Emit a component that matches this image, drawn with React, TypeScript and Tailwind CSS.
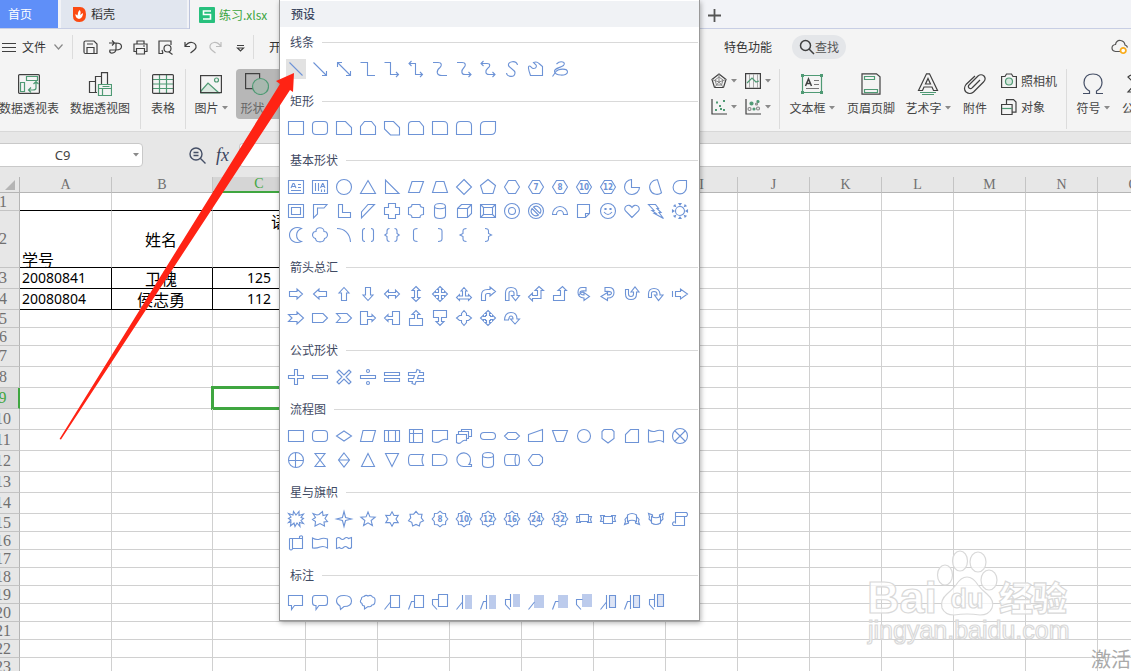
import type { ReactNode } from 'react';

const UI = "font-['Noto_Sans_CJK_SC',sans-serif]";

/* ---------- shape glyphs ---------- */

type Shape = {
  d: string;
  label?: string;
  light?: string;
  pale?: string;
};

const s = (d: string, label?: string): Shape => ({ d, label });

function star(points: number, outer: number, inner: number, cy = 8): string {
  let out = '';
  for (let i = 0; i < points * 2; i++) {
    const r = i % 2 === 0 ? outer : inner;
    const a = (Math.PI * i) / points - Math.PI / 2;
    out += (i === 0 ? 'M' : 'L') + (8 + r * Math.cos(a)).toFixed(2) + ' ' + (cy + r * Math.sin(a)).toFixed(2);
  }
  return out + 'z';
}

const HEX = 'M4.5 1.5h7L15.5 8l-4 6.5h-7L.5 8z';
const BADGE = star(8, 7.8, 6.2);
const CIRCLE = 'M.5 8a7.5 7.5 0 1 0 15 0a7.5 7.5 0 1 0-15 0';

const lines: Shape[] = [
  s('M1.5 1.5l13 13'),
  s('M1.5 1.5l13 13M14.5 10v4.5H10'),
  s('M1.5 1.5l13 13M14.5 10v4.5H10M1.5 6V1.5H6'),
  s('M.5 1.5h7v13H15'),
  s('M.5 1.5h6v12h8M12 11l2.5 2.5L12 16'),
  s('M1 2.5h6.5v11h7M12 11l2.5 2.5L12 16M3.500 0L1 2.500 3.500 5'),
  s('M1 1.5h5c4 0 4 3 2 5c-4 3-4 8 2 8h5'),
  s('M1 1.5h5c4 0 4 3 2 5c-3 3-3 7 1 7h6M12.500 11l2.500 2.500-2.500 2.500'),
  s('M1 2.5h6c4 0 3 3 1 4.500c-3 2.500-3 6.500 1 6.500h6M12.500 11l2.500 2.500-2.500 2.500M3.500 0L1 2.500 3.500 5'),
  s('M13.500 4c-1-5-10-4-9 .5c1 3 7 4 6.500 7.500c-.5 5-8 4-8.500 0'),
  s('M2.500 14.500C0 8 0 5 1.500 5c1.500 0 2 2.500 4 2.500c3 0 4-3 1.500-4.500L5.500 1.500c2-.7 4-.7 5.500 1l3.500 3v9z'),
  s('M4.500 3c4-4 10-2 7 1.500C8 7 3 7 2.500 10c-.5 5 13 5.500 13 1c0-4-9-3.500-11.500-.5L.5 15.500'),
];

const rects: Shape[] = [
  s('M.5 1.5h15v13H.5z'),
  s('M4 1.5h8q3.500 0 3.500 3.500v6q0 3.500-3.500 3.500H4Q.5 14.500.5 11V5Q.5 1.500 4 1.500z'),
  s('M.5 1.5h9l6 6v7H.5z'),
  s('M4.500 1.5h7l4 5v8H.5v-8z'),
  s('M.5 1.5h9l6 6v7.500h-9l-6-6z'),
  s('M4 1.5h7.500l4 5v8H.5V5q0-3.500 3.500-3.500z'),
  s('M.5 1.5h11q4 0 4 4v9H.5z'),
  s('M4.500 1.5h7q4 0 4 4v9H.5v-9q0-4 4-4z'),
  s('M5 1.5h10.500V10q0 4.500-4.500 4.500H.5V6Q.5 1.5 5 1.5z'),
];

const basics: Shape[] = [
  s('M.5 1.5h15v13H.5zM3 9l2-4.500h1L8 9M4 7.500h3M10 5.500h3M10 8.500h3M3 11.500h10'),
  s('M.5 1.5h15v13H.5zM3.500 4v8M6.500 4v8M8.500 9l2-4.500h.5L13 9M9.500 7.500h3M9.500 10.500V13M12.500 10.500V13'),
  s(CIRCLE),
  s('M8 1.5l7.500 13H.5z'),
  s('M1.5 1v13.500H15z'),
  s('M4 2.500h11.500l-4 11H.5z'),
  s('M4 2.500h8l3.500 11H.5z'),
  s('M8 .5L15.500 8 8 15.500.5 8z'),
  s('M8 .5l7.500 6-2.500 8H3l-2.500-8z'),
  s(HEX),
  s(HEX, '7'),
  s(HEX, '8'),
  s(HEX, '10'),
  s(HEX, '12'),
  s('M7.500.5A7.500 7.500 0 1 0 15.500 8.500h-8z'),
  s('M9.500.8l4 13A7.300 7.300 0 1 1 9.500.8z'),
  s('M8 1.500h6.500V8A6.700 6.700 0 1 1 8 1.500z'),
  s('M.5 1.500h15v13H.5zM3.500 4.500h9v7h-9z'),
  s('M1.500 1.500H15l-3 3.500H5.500v6l-4 4z'),
  s('M2.500 1.500h4v8h8v5h-12z'),
  s('M1.500 15V9L8 1.500h6.500z'),
  s('M4.500.5h7v4h4v7h-4v4h-7v-4h-4v-7h4z'),
  s('M4 1.500h8q0 3 3.500 3v7q-3.500 0-3.500 3H4q0-3-3.500-3v-7q3.500 0 3.500-3z'),
  s('M2.500 3.500v9c0 4 11 4 11 0v-9c0-4-11-4-11 0c0 3 11 3 11 0'),
  s('M1.500 5.500l4-4h10v9l-4 4h-10zM1.500 5.500h10v9M11.500 5.500l4-4'),
  s('M.5 1.500h15v13H.5zM3.500 4.500h9v7h-9zM.5 1.500l3 3M15.500 1.500l-3 3M.5 14.500l3-3M15.500 14.500l-3-3'),
  s(CIRCLE + 'M4.500 8a3.500 3.500 0 1 0 7 0a3.500 3.500 0 1 0-7 0'),
  s(CIRCLE + 'M4 5.500l6.500 6.500A4.700 4.700 0 0 1 4 5.500zM5.500 4L12 10.500A4.700 4.700 0 0 0 5.500 4z'),
  s('M.5 11.500a7.500 8 0 0 1 15 0h-4a3.500 4 0 0 0-7 0z'),
  s('M1.500 1.500h12v9l-4 4h-8zM9.500 14.500v-4h4'),
  s(CIRCLE + 'M5 5.500h1v1H5zM10 5.500h1v1h-1zM4 9q4 5 8 0'),
  s('M8 14.500L1.500 8C-1.500 4 5-.5 8 4.500c3-5 9.500-.5 6.500 3.500z'),
  s('M.5 1.500h7l3 4H9l4 4h-2l4.500 6-9-5H8L4 7.500h2z'),
  s('M3.500 8a4.500 4.500 0 1 0 9 0a4.500 4.500 0 1 0-9 0M7 .5h2L8 2zM7 15.500h2L8 14zM.5 7v2L2 8zM15.500 7v2L14 8zM2 3l1-1 .5 1.500zM14 3l-1-1-.5 1.500zM2 13l1 1 .5-1.500zM14 13l-1 1-.5-1.500z'),
  s('M13.500 1.500C7-1.500 1.500 3 1.500 8s5.500 9.500 12 6.500C7 12.500 7 4 13.500 1.500z'),
  s('M4 4.500c-.5-5 8-5 8 0c4 0 5 5.500.5 7c-.5 4.500-8.500 4.500-9 0c-4.500-1.500-3.500-7 .5-7z'),
  s('M1 1.500c7.500 0 13 5 13.500 13.500'),
  s('M5 1.500q-2.500 0-2.500 2.500v8q0 2.500 2.500 2.500M11 1.500q2.500 0 2.500 2.500v8q0 2.500-2.500 2.500'),
  s('M5.500 1.500q-2.500 0-2.500 2.500v2.500L.8 8 3 9.500V12q0 2.500 2.500 2.500M10.500 1.500q2.500 0 2.500 2.500v2.500L15.200 8 13 9.500V12q0 2.500-2.500 2.500'),
  s('M9.500 1.500q-4 0-4 2.500v8q0 2.500 4 2.500'),
  s('M6 1.500q4 0 4 2.500v8q0 2.500-4 2.500'),
  s('M10.500 1.500q-3.500 0-3.500 2.500v2.500L4 8l3 1.500V12q0 2.500 3.500 2.500'),
  s('M5 1.500q3.500 0 3.500 2.500v2.500l3 1.500-3 1.500V12q0 2.500-3.500 2.500'),
];

const arrows: Shape[] = [
  s('M1.500 5.500H9V3l5.500 5L9 13v-2.500H1.500z'),
  s('M14.500 5.500H7V3L1.500 8 7 13v-2.500h7.500z'),
  s('M5.500 14.500V7H3l5-5.500L13 7h-2.500v7.500z'),
  s('M5.500 1.500V9H3l5 5.500L13 9h-2.500V1.500z'),
  s('M.5 8l4-4v2.500h7V4l4 4-4 4V9.500h-7V12z'),
  s('M8 .5l4 4H9.500v7H12l-4 4-4-4h2.500v-7H4z'),
  s('M8 .5l3 3H9.500v3h3V5l3 3-3 3V9.500h-3v3H11l-3 3-3-3h1.500v-3h-3V11l-3-3 3-3v1.500h3v-3H5z'),
  s('M8 1.500l3 3.500H9.500v5h3V8.500l3 3-3 3V13h-9v1.500l-3-3 3-3V10h3V5H5z'),
  s('M1.500 14.500V9q0-5.500 6-5.500h2.500V1l5.500 4.500L10 10V7.500H7.500q-2 0-2 2v5z'),
  s('M1.500 14.500V7q0-5.500 5.500-5.500q6 0 6 5.500v2.500h2.500l-4 5-4-5H10V7q0-2-2.500-2T5 7v7.500z'),
  s('M.5 11l4-4v2.500h5v-5H7L11 .5l4.500 4H13v8H4.500V15z'),
  s('M1.500 9.500h7v-5H6l4.500-4 4 4h-2v10h-11z'),
  s('M10 1.500H6Q2 1.500 2 6.500q0 5 6 5.500v2.500l5.500-4-5.500-4V9Q4 8.500 4 6.500t6-1.500zM3 9q2-3.500 5-2.500'),
  s('M5 1.500h4q5 0 5 5q0 5.500-6.500 5.500v2.500L1 10.500l6.500-4V9q4 0 4-2T5 5.500z'),
  s('M1.500 3.500V8q0 5.500 5.500 5.500T12.500 8V6h2.500l-4-5-4 5h2.500v2q0 2.500-2.500 2.500T4.500 8V3.500z'),
  s('M.5 11.500V8q0-5.500 5.500-5.500T12 8v1h3l-4.500 5.500L6.500 9H9V8q0-2.500-3-2.500T3.500 8v3.500z'),
  s('M.5 5v6M3.500 5.500h5V3l7 5-7 5v-2.500h-5z'),
  s('M.5 4.500H9V2l6.500 6L9 14v-2.500H.5L4 8z'),
  s('M.5 3.500H11L15.500 8 11 12.500H.5z'),
  s('M.5 3.500H11L15.500 8 11 12.500H.5L4.500 8z'),
  s('M.5 1.500h7v5H12V4.500L15.500 8 12 11.500V9.500H7.500v5h-7z'),
  s('M15.500 1.500h-7v5H4V4.500L.5 8 4 11.500V9.500h4.500v5h7z'),
  s('M1.500 15.500v-7h5V4.500H4L8 .5l4 4H9.500v4h5v7z'),
  s('M1.500.5v7h5v4H4l4 4 4-4H9.500v-4h5v-7z'),
  s('M8 .5L10.500 3.500v2h2L15.500 8l-3 2.500h-2v2L8 15.500l-2.500-3v-2h-2L.5 8l3-2.500h2v-2z'),
  s('M8 .5l3 3H9.500v2h1v1h2V5l3 3-3 3V9.500h-2v1h-1v2H11l-3 3-3-3h1.500v-2h-1v-1h-2V11l-3-3 3-3v1.500h2v-1h1v-2H5z'),
  s('M.5 10Q1 2.500 7 2.500T13 9h2.500L11 14 6.500 9H9Q9 6 7 6t-2.500 4z'),
];

const formulas: Shape[] = [
  s('M6.500.5h3v6h6v3h-6v6h-3v-6h-6v-3h6z'),
  s('M.5 6.500h15v3H.5z'),
  s('M1 3l2-2 5 5 5-5 2 2-5 5 5 5-2 2-5-5-5 5-2-2 5-5z'),
  s('M.5 6.500h15v3H.5zM6.500 2a1.500 1.500 0 1 0 3 0a1.500 1.500 0 1 0-3 0M6.500 14a1.500 1.500 0 1 0 3 0a1.500 1.500 0 1 0-3 0'),
  s('M.5 3.500h15v3H.5zM.5 9.500h15v3H.5z'),
  s('M.5 3.500h7.500L9 .5l3 1-.5 2h4v3h-5l-1 3h6v3H8l-1 3-3-1 .5-2h-4v-3h5l1-3h-6z'),
];

const flows: Shape[] = [
  s('M.5 2.500h15v11H.5z'),
  s('M4 2.500h8q3.500 0 3.500 3.500v4q0 3.500-3.500 3.500H4Q.5 13.500.5 10V6Q.5 2.500 4 2.500z'),
  s('M8 3l7.500 5L8 13 .5 8z'),
  s('M3 2.500h12.500l-3 11H.5z'),
  s('M.5 2.500h15v11H.5zM4.500 2.500v11M11.500 2.500v11'),
  s('M1.500 1.500h13v13h-13zM1.500 5.500h13M5.500 1.500v13'),
  s('M.5 2.500h15v9q-4-1-7 1.500T.5 13.500z'),
  s('M.5 6.500h10v6q-3-1-5 1.500T.5 14.500zM2.500 6V3.500h10v7h-2M5.500 3V1.500h10v7h-3'),
  s('M4 4.500h8q3.500 0 3.500 3.500t-3.500 3.500H4Q.5 11.500.5 8T4 4.500z'),
  s('M4 4.500h8L15.500 8 12 11.500H4L.5 8z'),
  s('M.5 6.500l14-5v12H.5z'),
  s('M.5 2.500h15l-4 11h-7z'),
  s('M1.500 8a6.500 6.500 0 1 0 13 0a6.500 6.500 0 1 0-13 0'),
  s('M4 1.500h8l2 2v7L8 15l-6-4.500v-7z'),
  s('M6.500 1.500h8v13h-13v-8z'),
  s('M.5 2q4 2.500 7.500 1t7.500 0v11q-4-2.500-7.500-1t-7.500 1z'),
  s(CIRCLE + 'M3 3l10 10M13 3L3 13'),
  s(CIRCLE + 'M.5 8.500h15M7.500.5v15'),
  s('M3 1.500h10L8 8l5 6.500H3L8 8z'),
  s('M8 1l5.500 7L8 15 2.500 8zM2.500 8h11'),
  s('M8 1.500l6.500 13h-13z'),
  s('M1.500 1.500h13L8 14.500z'),
  s('M3 2.500h12.500q-3 5.500 0 11H3Q.5 13.500.5 8T3 2.500z'),
  s('M.5 2.500h8Q15 2.500 15 8t-6.500 5.500h-8z'),
  s('M15.500 14.500H7.500A6.800 6.800 0 1 1 14.500 8q0 3-1.500 4.500h2.500z'),
  s('M2.500 3.500v9c0 4 11 4 11 0v-9c0-4-11-4-11 0c0 3 11 3 11 0'),
  s('M3 2.500h10q2.500 0 2.500 5.500T13 13.500H3Q.5 13.500.5 8T3 2.500zM13 2.500Q11 2.500 11 8t2 5.500'),
  s('M4.500 2.500h7l3 3v5l-3 3h-7L.5 8z'),
];

const stars: Shape[] = [
  s('M8 4l3-3.500v4L15.500 3 13 6.500l2.500 1-2.500 2 2.500 3-4-1 .5 4L9 12l-2 3.500L6 12l-3.500 3 .5-4-2.500.5L3 9 .5 7.500 3 6 .5 2.500 5 4l.5-3.500z'),
  s('M7 3.500L10.500.5l.5 4 4.500-1L13 7.500l2.500 3-3.500.5.500 4L8 12.500 3 15l.5-4.500L.5 8.500l3-2-2.500-4 4 1.500z'),
  s(star(4, 7.500, 2.200)),
  s(star(5, 7.500, 3.300, 8.500)),
  s(star(6, 7.200, 4)),
  s(star(7, 7.700, 5.400)),
  s(BADGE, '8'),
  s(BADGE, '10'),
  s(BADGE, '12'),
  s(BADGE, '16'),
  s(BADGE, '24'),
  s(BADGE, '32'),
  s('M3.500 3.500h9v7h-9zM3.500 5.500h-3l1 3-1 3h4v-1M12.500 5.500h3l-1 3 1 3h-4v-1'),
  s('M3.500 5.500h9v7h-9zM3.500 10.500h-3l1-3-1-3h4v1M12.500 10.500h3l-1-3 1-3h-4v1'),
  s('M3.500 4q4.500-3 9 0v6.500q-4.500-2.500-9 0zM3.500 5.500l-2.500 3 .5 2-1 3 4-1.500v-1.500M12.500 5.500l2.500 3-.5 2 1 3-4-1.500v-1.500'),
  s('M3.500 5.500q4.500 2.500 9 0v6.500q-4.500 3-9 0zM3.500 10.500L1 8l.5-2-1-3.500 4 1.500v1.500M12.500 10.500L15 8l-.5-2 1-3.500-4 1.500v1.500'),
  s('M3.500 12.500v-11h11q2 2 0 4H4M12.500 5.500v9h-11q-2-1.500 0-3.500h2'),
  s('M1.500 3.500h10V1.500q2-1.500 3 0v12h-10M11.500 3.500h3M4.500 3.500v10.500q-1.500 2-3 0v-10.500'),
  s('M.5 3q4 2.500 7.500 1t7.500 0v9q-4-2.500-7.500-1t-7.500 1z'),
  s('M.5 3.500q2-2 4 0t4 0 4 0l3-1v10q-2 2-4 0t-4 0-4 0l-3 1z'),
];

const callouts: Shape[] = [
  s('M.5 1.500h14v10h-8l-3 4v-4h-3z'),
  s('M3 1.500h10q2.500 0 2.500 3v4q0 3-2.500 3H7l-3 4v-4H3q-2.500 0-2.500-3v-4q0-3 2.500-3z'),
  s('M4 12Q.5 10 .5 7Q.5 1.500 8 1.500T15.500 7Q15.500 12.500 8 12.500L4.500 15.500z'),
  s('M4 2.500Q6 .5 8 2q3-1.500 4.500 1q3 .5 2.500 4q0 4-3 4-1 2.500-4 1.500L4.500 15v-3Q2 12 2 9.500Q-1 8 1.500 5Q1 3 4 2.500z'),
  s('M6.500 1.500h9v12h-9zM.5 15.500l6-7.500'),
  s('M6.500 1.500h9v12h-9zM.5 15.500L3.500 7.500h3'),
  s('M6.500.5h9v12h-9zM6.500 5.500h-6v5l4.500 5'),
  { d: 'M6.500 1v14M.5 15.500l6-7.500', light: 'M9 1h7v14H9z' },
  { d: 'M6.500 1v14M.5 15.500L3.500 7.500h3', light: 'M9 1h7v14H9z' },
  { d: 'M6.500 0v13M6.500 5.500h-5v5l4.500 5', light: 'M9 0h7v13H9z' },
  { d: 'M.5 15.500l6-7.500', light: 'M6 1h10v13H6z' },
  { d: 'M.5 15.500L3.500 7.500h3', light: 'M6 1h10v13H6z' },
  { d: 'M6.500 5.500h-6v5l4.500 5', light: 'M6 0h10v13H6z' },
  { d: 'M6.500 1v14M.5 15.500l6-7.500', pale: 'M9.500 1.500h6v12h-6z' },
  { d: 'M6.500 1v14M.5 15.500L3.500 7.500h3', pale: 'M9.500 1.500h6v12h-6z' },
  { d: 'M6.500 0v13M6.500 5.500h-5v5l4.500 5', pale: 'M9.500.5h6v12h-6z' },
];

const sections: { title: string; shapes: Shape[] }[] = [
  { title: '线条', shapes: lines },
  { title: '矩形', shapes: rects },
  { title: '基本形状', shapes: basics },
  { title: '箭头总汇', shapes: arrows },
  { title: '公式形状', shapes: formulas },
  { title: '流程图', shapes: flows },
  { title: '星与旗帜', shapes: stars },
  { title: '标注', shapes: callouts },
];

function ShapeIcon({ shape }: { shape: Shape }) {
  return (
    <svg viewBox="0 0 16 16" className="size-4 overflow-visible" fill="none" stroke="#6d93d6" strokeWidth="1.1">
      {shape.light && <path d={shape.light} fill="#bccbec" stroke="none" />}
      {shape.pale && <path d={shape.pale} fill="#dde4f5" />}
      <path d={shape.d} />
      {shape.label && (
        <text
          x="8"
          y="11"
          textAnchor="middle"
          fontSize="8"
          fontWeight="700"
          fontFamily="DejaVu Sans Condensed, Liberation Sans Narrow, Roboto, sans-serif"
          fill="#6d93d6"
          stroke="none"
        >
          {shape.label}
        </text>
      )}
    </svg>
  );
}

function ShapePanel() {
  return (
    <section className="absolute top-0 left-[279px] z-10 w-[421px] border border-t-0 border-[#999] bg-white pb-[6px] text-[#3f4a63] shadow-[1px_2px_5px_rgba(0,0,0,0.3)]">
      <h2 className="mt-px h-[26px] bg-[#f0f2f5] pl-[11px] text-xs leading-[26px] font-medium">预设</h2>
      <div className="flex flex-col gap-[11px] pt-[6px]">
        {sections.map((section, si) => (
          <div key={section.title}>
            <div className="mb-[6px] flex h-[18px] items-center gap-2 pr-px pl-[10px]">
              <h3 className="text-xs leading-4">{section.title}</h3>
              <div className="h-px grow bg-[#d9d9d9]" />
            </div>
            <div className="flex flex-wrap pl-1">
              {section.shapes.map((shape, i) => (
                <button key={i} type="button" aria-label={section.title} className="flex size-6 items-center justify-center">
                  <span
                    className={
                      si === 0 && i === 0
                        ? 'flex size-5 items-center justify-center bg-[#e2e2e2]'
                        : 'flex size-5 items-center justify-center'
                    }
                  >
                    <ShapeIcon shape={shape} />
                  </span>
                </button>
              ))}
            </div>
          </div>
        ))}
      </div>
    </section>
  );
}

/* ---------- toolbar ---------- */

function Svg({ w, h, children }: { w: number; h: number; children: ReactNode }) {
  return (
    <svg width={w} height={h} viewBox={`0 0 ${w} ${h}`} fill="none" stroke="#404040" strokeWidth="1.2" className="shrink-0">
      {children}
    </svg>
  );
}

const G = '#4f9a74';

function Caret() {
  return (
    <svg width="6" height="4" viewBox="0 0 6 4" className="shrink-0">
      <path d="M0 0h6L3 3.500z" fill="#8a8a8a" />
    </svg>
  );
}

function Divider({ className }: { className: string }) {
  return <div className={`w-px shrink-0 bg-[#dcdcdc] ${className}`} />;
}

function BigButton({ label, icon, caret, className }: { label: string; icon: ReactNode; caret?: boolean; className: string }) {
  return (
    <button type="button" className={`flex h-[50px] shrink-0 flex-col items-center whitespace-nowrap ${className}`}>
      <span className="flex h-[30px] items-center">{icon}</span>
      <span className="flex h-[18px] items-center gap-[3px] text-xs leading-[18px]">
        {label}
        {caret && <Caret />}
      </span>
    </button>
  );
}

function TabBar() {
  return (
    <div className="flex h-[29px] shrink-0 border-b border-[#c8cee4] bg-[#f2f3f7] text-xs">
      <button type="button" className="mr-[3px] h-7 w-[58px] shrink-0 bg-[#5f8ff8] pr-[18px] text-white">
        首页
      </button>
      <button type="button" className="flex h-7 w-[126px] shrink-0 items-center gap-[5px] bg-[#e1e6ef] pl-3 text-[#333]">
        <svg width="13" height="15" viewBox="0 0 13 15">
          <path d="M0 0h7q6 0 6 7.500T6.500 15 0 9z" fill="#fb4a12" />
          <path d="M6.500 3q2 2 .5 5l3-2q0 5-4 6-4-1-3.500-5l2 1.500Q4.500 5 6.500 3z" fill="#fff" />
        </svg>
        稻壳
      </button>
      <button
        type="button"
        className="ml-[2px] flex h-[29px] w-[511px] shrink-0 items-center gap-1 border-l border-[#bcc4dc] bg-[#f4f4f4] pl-[9px] text-[#3ba53f]"
      >
        <svg width="16" height="16" viewBox="0 0 16 16">
          <rect width="16" height="16" rx="1" fill="#27c07d" />
          <path d="M12 4H4.500v3.500h7V12H4" fill="none" stroke="#fff" strokeWidth="1.600" />
        </svg>
        练习.xlsx
      </button>
      <button type="button" aria-label="新建" className="ml-[8px] flex h-[30px] items-center">
        <Svg w={13} h={13}>
          <path d="M6.500 0v13M0 6.500h13" stroke="#555" strokeWidth="1.800" />
        </Svg>
      </button>
    </div>
  );
}

const quick: { name: string; icon: ReactNode }[] = [
  { name: '保存', icon: <path d="M1 2.500q0-1.500 1.500-1.500H11l3 3v9.500H2.500Q1 13.500 1 12zM4 13.500v-6h7v6M4 4h6" /> },
  { name: '输出', icon: <path d="M1 3h7q5.500 0 5.500 3.500T8 10H5.500M4 .5L6.500 3 4 5.500M8 3.500v5q0 5-5 4.500-2-1-1-3h6" /> },
  { name: '打印', icon: <path d="M4 4V1h7v3M3.500 11.500H1V4h13v7.500h-2.500M3.500 8.500h8v5.500h-8zM10 6h2" /> },
  { name: '打印预览', icon: <path d="M5 13.500H1V1h12v4M11 12l3.500 2.500M5 13.500L4 10M6 8.500a3.500 3.500 0 1 0 7 0a3.500 3.500 0 1 0-7 0" /> },
  { name: '撤销', icon: <path d="M2 2v4.500h5M2 6.500Q5 2 9 2.500q4.500 1 4 5-.5 2-5.500 5.500" /> },
  { name: '恢复', icon: <path d="M13 2v4.500H8M13 6.500Q10 2 6 2.500q-4.500 1-4 5 .5 2 5.500 5.500" stroke="#bdbdbd" /> },
  { name: '自定义', icon: <path d="M4 5.500h7M4.500 8l3 3 3-3z" /> },
];

function MenuRow() {
  return (
    <div className="flex h-9 shrink-0 items-center text-xs text-[#333]">
      <div className="flex w-[700px] shrink-0 items-center pl-[2px]">
        <Svg w={14} h={11}>
          <path d="M0 1.500h14M0 5.500h14M0 9.500h14" />
        </Svg>
        <button type="button" className="ml-[6px] flex items-center gap-2">
          文件
          <Svg w={9} h={6}>
            <path d="M.5.5l4 4.500 4-4.500" stroke="#888" />
          </Svg>
        </button>
        <Divider className="mr-[5px] ml-[9px] h-6" />
        {quick.map((q) => (
          <button key={q.name} type="button" aria-label={q.name} className="flex w-[25px] shrink-0 justify-center">
            <Svg w={15} h={15}>{q.icon}</Svg>
          </button>
        ))}
        <Divider className="mr-[15px] h-6" />
        <span>开</span>
      </div>
      <div className="flex grow items-center pl-6">
        <button type="button" className="shrink-0">特色功能</button>
        <button
          type="button"
          className="ml-5 flex h-6 w-[54px] shrink-0 items-center justify-center rounded-full bg-[#e4e6e9] text-[#555]"
        >
          <Svg w={16} h={16}>
            <path d="M1.500 6.500a5 5 0 1 0 10 0a5 5 0 1 0-10 0M10 10l5 5" strokeWidth="1.500" />
          </Svg>
          查找
        </button>
        <div className="ml-auto pr-[2px]">
          <Svg w={18} h={16}>
            <path d="M9 12.500H4.500Q1 12 1 9t3.500-3.500Q5.500 1 9.500 1.500t4.500 4.500q2 .5 2.500 2.500" stroke="#555" />
            <path d="M9.500 11.500a2.700 2.700 0 1 0 5.400 0a2.700 2.700 0 1 0-5.400 0" stroke="#f9ac1c" strokeWidth="1.800" fill="#fff" />
          </Svg>
        </div>
      </div>
    </div>
  );
}

const radar = (
  <Svg w={16} h={16}>
    <path d="M8 1l7 5.500-2.500 8h-9L1 6.500z" />
    <path d="M8 4l4 3-1.500 5h-5L4 7zM8 1v8M1 6.500L8 9M15 6.500L8 9M3.500 14.500L8 9M12.500 14.500L8 9" stroke="#888" strokeWidth="1" />
  </Svg>
);
const stock = (
  <Svg w={16} h={16}>
    <path d="M.6.6h14.800v14.800H.6z" />
    <path d="M4.500 1v14M8.500 1v14M12.500 1v14" stroke="#aaa" strokeWidth="1" />
    <path d="M2 10l5-5 4 4 3-1" stroke={G} />
  </Svg>
);
const scatter = (
  <Svg w={16} h={16}>
    <path d="M1 0v15h15" />
    <path d="M5 3.500h2M12 2h2M8 7h2M4 11h2M12 11h2M9 10h2" stroke={G} strokeWidth="2" />
  </Svg>
);
const bubble = (
  <Svg w={16} h={16}>
    <path d="M1 0v15h15" />
    <circle cx="6.500" cy="4.500" r="1.500" fill={G} stroke={G} />
    <circle cx="13" cy="2.500" r="1" fill={G} stroke={G} />
    <circle cx="4.500" cy="10" r="1.500" stroke="#888" />
    <circle cx="9" cy="10" r="1" fill={G} stroke={G} />
    <circle cx="13" cy="9.500" r="1.500" stroke="#888" />
    <circle cx="11.500" cy="5" r="1" stroke="#888" />
  </Svg>
);

function Ribbon() {
  return (
    <div className="flex h-[66px] shrink-0 text-[#444]">
      <div className="-ml-[6px] flex w-[706px] shrink-0 pt-1">
        <BigButton
          className="w-[70px]"
          label="数据透视表"
          icon={
            <Svg w={22} h={20}>
              <rect x=".6" y=".6" width="20.800" height="18.800" rx="1" />
              <path d="M8.500 2.500h11v4h-11zM2.500 8.500h4v9h-4zM18 8v6q0 2-3 2h-4M15.500 10L18 7.500l2.500 2.500M13 13.500L10.500 16l2.500 2.500" stroke={G} />
            </Svg>
          }
        />
        <BigButton
          className="w-[72px]"
          label="数据透视图"
          icon={
            <Svg w={24} h={24}>
              <path d="M9 20.500H1.500v-11H7M7.500 20.500v-16h5.500M13.500 12V.6h6V12" />
              <path d="M10.500 12.500h13v11h-13zM10.500 16.500h13M14.500 23v-6.500M14.500 14.500h7" stroke={G} />
            </Svg>
          }
        />
        <Divider className="ml-1 h-[60px]" />
        <BigButton
          className="w-[44px]"
          label="表格"
          icon={
            <Svg w={22} h={20}>
              <path d="M1 5.500h20M1 10h20M1 14.500h20M7.500 1v18M14.500 1v18" stroke={G} />
              <rect x=".6" y=".6" width="20.800" height="18.800" rx="1" />
            </Svg>
          }
        />
        <Divider className="h-[60px]" />
        <BigButton
          className="w-[50px]"
          label="图片"
          caret
          icon={
            <Svg w={22} h={20}>
              <path d="M1 17l7-8 11 10H1z" fill="#dbe9e1" stroke={G} />
              <circle cx="16.500" cy="6" r="2" stroke={G} />
              <rect x=".6" y="1.600" width="20.800" height="17" />
            </Svg>
          }
        />
        <BigButton
          className="w-[54px] rounded bg-[#b7b7b7] pr-3 text-[#666]"
          label="形状"
          caret
          icon={
            <Svg w={24} h={22}>
              <path d="M.6.6h14v15H.6z" />
              <circle cx="15.500" cy="13.500" r="8" stroke={G} fill="#a8b8af" />
            </Svg>
          }
        />
      </div>
      <div className="flex pt-1">
        <div className="grid h-[50px] w-[79px] shrink-0 grid-cols-[34px_34px] content-between pl-[11px]">
          {[radar, stock, scatter, bubble].map((icon, i) => (
            <button key={i} type="button" aria-label="图表" className="flex h-6 items-center gap-1">
              {icon}
              <Caret />
            </button>
          ))}
        </div>
        <Divider className="h-[60px]" />
        <BigButton
          className="w-16"
          label="文本框"
          caret
          icon={
            <Svg w={22} h={20}>
              <path d="M1.500 1.500h19v17h-19z" stroke={G} />
              <path d="M0 0h3v3H0zM19 0h3v3h-3zM0 17h3v3H0zM19 17h3v3h-3z" fill={G} stroke="none" />
              <path d="M4.500 12l3-7 3 7M5.500 9.500h4" strokeWidth="1.500" />
              <path d="M13 6.500h5M13 10.500h5M5 14.500h13" stroke="#777" strokeWidth="1" />
            </Svg>
          }
        />
        <BigButton
          className="w-[54px]"
          label="页眉页脚"
          icon={
            <Svg w={20} h={22}>
              <path d="M1 .8h14.500l3.500 3v17.400H1z" />
              <path d="M3.500 3.500h10v3h-10zM3.500 16.500h13v3h-13z" stroke={G} />
            </Svg>
          }
        />
        <BigButton
          className="w-[60px]"
          label="艺术字"
          caret
          icon={
            <Svg w={22} h={22}>
              <path d="M1.500 17.500L9.500.8h3l8 16.700h-4l-1.500-3.500H7l-1.500 3.500zM8.500 11h5L11 5.500z" />
              <path d="M3 19.500h16M5 21.500h12" stroke={G} />
            </Svg>
          }
        />
        <BigButton
          className="w-[34px]"
          label="附件"
          icon={
            <Svg w={24} h={22}>
              <path d="M17 7l-7.500 7.500q-1.500 2-3.500.5-1.500-2 .5-3.500l8.500-8.500q3-2.500 6 0 2.500 3-.5 6l-10 10q-3.500 3-7.500 0-3-3.500 0-7.500L12 3" />
            </Svg>
          }
        />
        <div className="ml-[9px] flex h-[50px] w-[65px] shrink-0 flex-col justify-between text-xs">
          <button type="button" className="flex h-6 items-center gap-1 whitespace-nowrap">
            <Svg w={16} h={16}>
              <path d="M.6 3.500H4L5.500 1h5L12 3.500h3.400v11H.6z" />
              <circle cx="8" cy="8.500" r="3.500" stroke={G} fill="#d5e6dc" />
            </Svg>
            照相机
          </button>
          <button type="button" className="flex h-6 items-center gap-1 whitespace-nowrap">
            <Svg w={16} h={16}>
              <path d="M5.500 5V.6h7l2.500 2.500v10h-4M.6 5.500h10.500v10H.6z" />
              <path d="M1 9.500h10" stroke={G} />
            </Svg>
            对象
          </button>
        </div>
        <Divider className="h-[60px]" />
        <BigButton
          className="w-[52px]"
          label="符号"
          caret
          icon={
            <Svg w={22} h={22}>
              <path d="M1 20.500h6.500v-2.500Q2 15 2 9.500 2.500 1 11 1t9 8.500q0 5.500-5.500 8.500v2.500H21" stroke="#454f66" />
            </Svg>
          }
        />
        <BigButton
          className="ml-[3px] w-6"
          label="公式"
          icon={
            <Svg w={16} h={22}>
              <path d="M15 1.500Q7 0 2 4l7 7-7 8h13" />
            </Svg>
          }
        />
      </div>
    </div>
  );
}

function FormulaBar() {
  return (
    <div className="flex h-[46px] shrink-0 items-start border-t border-[#d8d8d8] bg-[#e7e7e7] pt-[11px]">
      <div className="-ml-[6px] flex h-6 w-[149px] shrink-0 items-center rounded border border-[#c9c9c9] bg-white pr-[3px]">
        <input
          aria-label="名称框"
          defaultValue="C9"
          className="w-full min-w-0 bg-transparent pr-[3px] text-center font-['Noto_Sans',sans-serif] text-[13px] leading-5 text-[#444] outline-none"
        />
        <Caret />
      </div>
      <div className="ml-[46px] flex h-6 shrink-0 items-center gap-[10px]">
        <Svg w={17} h={17}>
          <path d="M1 7a6 6 0 1 0 12 0a6 6 0 1 0-12 0M11.500 11.500l5 5M4.500 5.500h5M4.500 8.500h5" stroke="#454f66" strokeWidth="1.400" />
        </Svg>
        <span className="font-['Liberation_Serif',serif] text-lg leading-6 text-[#3b4560] italic">fx</span>
      </div>
      <input aria-label="编辑栏" className="ml-[10px] h-6 min-w-0 grow rounded-l border border-r-0 border-[#c9c9c9] bg-white outline-none" />
    </div>
  );
}

/* ---------- worksheet ---------- */

const columns = 'ABCDEFGHIJKLMNO'.split('');
const shortRows = [1, 5, 6, 15, 16, 17, 18, 19, 20, 21, 22, 23];
const rows = Array.from({ length: 23 }, (_, i) => i + 1);

const cells: Record<string, { text: string; className: string }> = {
  A2: { text: '学号', className: 'pl-[2px] align-bottom text-base leading-4' },
  B2: { text: '姓名', className: 'pr-[2px] text-center align-middle text-base leading-4' },
  C2: { text: '语', className: 'pr-[18px] text-right align-top text-base leading-5' },
  A3: { text: '20080841', className: "pl-[2px] font-['Noto_Sans',sans-serif] text-sm leading-4" },
  B3: { text: '卫槐', className: 'pr-[2px] text-center text-base leading-4' },
  C3: { text: '125', className: "text-center font-['Noto_Sans',sans-serif] text-sm leading-4" },
  A4: { text: '20080804', className: "pl-[2px] font-['Noto_Sans',sans-serif] text-sm leading-4" },
  B4: { text: '侯志勇', className: 'pr-[2px] text-center text-base leading-4' },
  C4: { text: '112', className: "text-center font-['Noto_Sans',sans-serif] text-sm leading-4" },
};

function borders(col: string, row: number): string {
  const inTable = 'ABC'.includes(col);
  const bottom = inTable && row <= 4 ? 'border-b-black' : 'border-b-[#d0d0d0]';
  const right = inTable && (row === 3 || row === 4) ? 'border-r-black' : 'border-r-[#d0d0d0]';
  return `border-r border-b ${bottom} ${right}`;
}

function Sheet() {
  return (
    <div className="-ml-[13px] grow overflow-hidden bg-white">
      <table className="w-[1183px] table-fixed border-separate border-spacing-0">
        <colgroup>
          <col className="w-[33px]" />
          <col className="w-[92px]" />
          <col className="w-[101px]" />
          <col className="w-[93px]" />
          {columns.slice(3).map((c) => (
            <col key={c} className="w-[72px]" />
          ))}
        </colgroup>
        <thead>
          <tr className="h-4 font-['Liberation_Serif',serif] text-sm leading-[15px] text-[#707070]">
            <th className="border-r border-b border-[#b5b5b5] bg-[#e7e7e7] p-0">
              <svg width="10" height="10" viewBox="0 0 10 10" className="mr-1 ml-auto">
                <path d="M10 0v10H0z" fill="#b5b5b5" />
              </svg>
            </th>
            {columns.map((c) => (
              <th
                key={c}
                className={
                  c === 'C'
                    ? 'border-r border-b-2 border-r-[#c4c4c4] border-b-[#3fa640] bg-[#d5d5d5] p-0 leading-[14px] font-normal text-[#3fa640]'
                    : 'border-r border-b border-r-[#c4c4c4] border-b-[#b5b5b5] bg-[#e7e7e7] p-0 font-normal'
                }
              >
                {c}
              </th>
            ))}
          </tr>
        </thead>
        <tbody>
          {rows.map((r) => (
            <tr key={r} className={r === 2 ? 'h-[57px]' : shortRows.includes(r) ? 'h-[18px]' : 'h-[21px]'}>
              <th
                className={
                  r === 9
                    ? "border-r-2 border-b border-r-[#3fa640] border-b-[#c4c4c4] bg-[#d5d5d5] p-0 font-['Liberation_Serif',serif] text-base leading-4 font-normal text-[#3fa640]"
                    : "border-r border-b border-r-[#b5b5b5] border-b-[#c4c4c4] bg-[#e7e7e7] p-0 font-['Liberation_Serif',serif] text-base leading-4 font-normal text-[#707070]"
                }
              >
                {r}
              </th>
              {columns.map((c) => {
                const cell = cells[c + r];
                return (
                  <td key={c} className={`relative p-0 text-black ${borders(c, r)} ${cell ? cell.className : 'leading-4'}`}>
                    {cell?.text}
                    {c === 'C' && r === 9 && <span className="absolute -inset-[2px] border-[3px] border-[#3fa640]" />}
                  </td>
                );
              })}
            </tr>
          ))}
        </tbody>
      </table>
    </div>
  );
}

/* ---------- overlays ---------- */

function Watermark() {
  return (
    <svg
      width="210"
      height="102"
      viewBox="0 0 210 102"
      className="pointer-events-none absolute right-[58px] bottom-[20px]"
      fill="#ffffff"
      fillOpacity="0.75"
      stroke="#d9d9d9"
      strokeWidth="1.200"
      fontFamily="Liberation Sans, Noto Sans CJK SC, sans-serif"
    >
      <text x="4" y="64" fontSize="45" fontWeight="700">Bai</text>
      <ellipse cx="82" cy="26" rx="7.500" ry="10" />
      <ellipse cx="97" cy="12" rx="7.500" ry="10" />
      <ellipse cx="115" cy="13" rx="8" ry="10" />
      <ellipse cx="126" cy="31" rx="8" ry="10" />
      <path d="M104 28q6 0 11 8 3 4 9 9 8 7 5 14t-12 7q-13-2-26 0-9 0-12-7-2-8 5-14 5-4 9-9 5-8 11-8z" />
      <text x="104" y="59" fontSize="27" fontWeight="700" textAnchor="middle">du</text>
      <text x="136" y="62" fontSize="34" fontWeight="900">经验</text>
      <text x="5" y="90" fontSize="25">jingyan.baidu.com</text>
    </svg>
  );
}

export default function App() {
  return (
    <main className={`relative flex h-screen flex-col overflow-hidden bg-[#f4f4f4] ${UI}`}>
      <TabBar />
      <MenuRow />
      <Ribbon />
      <FormulaBar />
      <Sheet />
      <ShapePanel />
      <Watermark />
      <p className="absolute right-0 bottom-0 text-xl leading-6 text-[#a9a9a9]">激活</p>
      <svg
        width="300"
        height="445"
        viewBox="0 0 300 445"
        className="pointer-events-none absolute top-0 left-0 z-20"
        aria-hidden="true"
      >
        <path d="M294 73L276 81l4 3L59.500 439l1.500.5L290 90l3 2z" fill="#ff2314" />
      </svg>
    </main>
  );
}
